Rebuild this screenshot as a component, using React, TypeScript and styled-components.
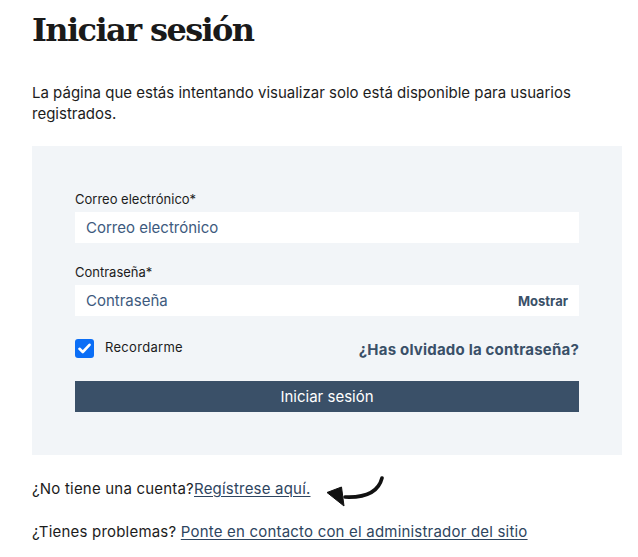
import React, { useState } from 'react';
import styled, { createGlobalStyle } from 'styled-components';

const GlobalStyle = createGlobalStyle`
  html, body {
    margin: 0;
    padding: 0;
    background: #ffffff;
  }
  body {
    font-family: 'Inter', 'Noto Sans', sans-serif;
    color: #1c1c1c;
  }
`;

const Page = styled.main`
  padding: 10px 16px 0 32px;
  width: 590px;
`;

const Title = styled.h1`
  font-family: 'DejaVu Serif', 'Liberation Serif', serif;
  font-size: 32px;
  font-weight: 700;
  letter-spacing: -1.6px;
  color: #1a1a1a;
  margin: 0 0 32px;
  line-height: 40px;
`;

const Intro = styled.p`
  font-size: 15px;
  line-height: 21px;
  margin: 0 0 22px;
  color: #1c1c1c;
`;

const Panel = styled.section`
  background: #f2f5f8;
  padding: 45px 43px 43px;
  display: flex;
  flex-direction: column;
`;

const Field = styled.div`
  display: flex;
  flex-direction: column;
  gap: 5px;
  margin-bottom: 21px;
`;

const Label = styled.label`
  font-size: 13px;
  line-height: 16px;
  color: #1c1c1c;
`;

const InputWrap = styled.div`
  display: flex;
  align-items: center;
  background: #ffffff;
  height: 31px;
`;

const Input = styled.input`
  flex: 1;
  border: none;
  outline: none;
  background: transparent;
  height: 100%;
  padding: 0 11px;
  font-family: inherit;
  font-size: 15px;
  color: #2f4b6a;

  &::placeholder {
    color: #3d5a7e;
  }
`;

const ShowButton = styled.button`
  border: none;
  background: none;
  font-family: inherit;
  font-size: 13px;
  font-weight: 700;
  color: #3a5068;
  padding: 0 11px;
  cursor: pointer;
`;

const OptionsRow = styled.div`
  display: flex;
  justify-content: space-between;
  align-items: flex-start;
  margin-top: 2px;
  margin-bottom: 22px;
`;

const CheckLabel = styled.label`
  display: flex;
  align-items: flex-start;
  gap: 11px;
  font-size: 13px;
  line-height: 16px;
  letter-spacing: 0.3px;
  color: #1c1c1c;
  cursor: pointer;
`;

const CheckBox = styled.span<{ $checked: boolean }>`
  width: 19px;
  height: 19px;
  border-radius: 3px;
  background: ${({ $checked }) => ($checked ? '#0b6ef6' : '#ffffff')};
  display: flex;
  align-items: center;
  justify-content: center;
  flex-shrink: 0;
`;

const ForgotLink = styled.a`
  font-size: 15px;
  font-weight: 700;
  letter-spacing: 0.2px;
  color: #3a5068;
  text-decoration: none;
  margin-top: 1px;
`;

const SubmitButton = styled.button`
  height: 31px;
  border: none;
  background: #3a5068;
  color: #ffffff;
  font-family: inherit;
  font-size: 15px;
  cursor: pointer;
`;

const Footer = styled.div`
  display: flex;
  flex-direction: column;
  gap: 21px;
  margin-top: 23px;
  font-size: 15px;
  line-height: 22px;
  letter-spacing: 0.2px;
`;

const FooterLine = styled.p`
  margin: 0;
  display: flex;
  align-items: center;
  height: 22px;
`;

const FooterLink = styled.a`
  color: #2e4560;
  text-decoration: underline;
  text-underline-offset: 2px;
`;

const ArrowIcon = styled.svg`
  flex-shrink: 0;
  margin: -3px 0 -7px 15px;
`;

const App: React.FC = () => {
  const [remember, setRemember] = useState(true);

  return (
    <Page>
      <GlobalStyle />
      <Title>Iniciar sesión</Title>
      <Intro>
        La página que estás intentando visualizar solo está disponible para usuarios registrados.
      </Intro>
      <Panel as="form" onSubmit={(e: React.FormEvent) => e.preventDefault()}>
        <Field>
          <Label htmlFor="login-email">Correo electrónico*</Label>
          <InputWrap>
            <Input id="login-email" type="email" placeholder="Correo electrónico" />
          </InputWrap>
        </Field>
        <Field>
          <Label htmlFor="login-password">Contraseña*</Label>
          <InputWrap>
            <Input id="login-password" type="password" placeholder="Contraseña" />
            <ShowButton type="button">Mostrar</ShowButton>
          </InputWrap>
        </Field>
        <OptionsRow>
          <CheckLabel onClick={() => setRemember((r) => !r)}>
            <CheckBox $checked={remember}>
              {remember && (
                <svg width="13" height="11" viewBox="0 0 13 11">
                  <path d="M1.5 5.8 L4.8 9 L11.5 1.8" fill="none" stroke="#fff" strokeWidth="2.6" strokeLinecap="round" strokeLinejoin="round" />
                </svg>
              )}
            </CheckBox>
            Recordarme
          </CheckLabel>
          <ForgotLink href="#">¿Has olvidado la contraseña?</ForgotLink>
        </OptionsRow>
        <SubmitButton type="submit">Iniciar sesión</SubmitButton>
      </Panel>
      <Footer>
        <FooterLine>
          ¿No tiene una cuenta?<FooterLink href="#">Regístrese aquí.</FooterLink>
          <ArrowIcon width="58" height="32" viewBox="0 0 58 32">
            <path d="M56 3 C53 15 42 23 19 22" fill="none" stroke="#111" strokeWidth="3.6" strokeLinecap="round" />
            <path d="M1 17.5 L15.5 12 L18 31 Z" fill="#111" strokeLinejoin="round" stroke="#111" strokeWidth="1" />
          </ArrowIcon>
        </FooterLine>
        <FooterLine>
          ¿Tienes problemas?&nbsp;<FooterLink href="#">Ponte en contacto con el administrador del sitio</FooterLink>
        </FooterLine>
      </Footer>
    </Page>
  );
};

export default App;
